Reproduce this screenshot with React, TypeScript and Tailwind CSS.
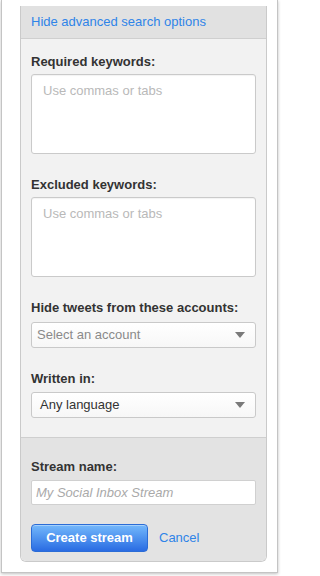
import { useState } from "react";

function Caret() {
  return (
    <svg width="10" height="6" viewBox="0 0 10 6" className="shrink-0">
      <path d="M0 0 L10 0 L5 6 Z" fill="#7a7a7a" />
    </svg>
  );
}

function Label({ children, gap }: { children: string; gap: string }) {
  return (
    <div className={`text-[13px] font-bold leading-[17px] text-[#333] ${gap}`}>
      {children}
    </div>
  );
}

function FakeSelect({
  value,
  muted,
  indent,
}: {
  value: string;
  muted?: boolean;
  indent: string;
}) {
  return (
    <div
      className={`flex h-[26px] items-center justify-between rounded-[3px] border border-[#c9c9c9] bg-gradient-to-b from-white to-[#f7f7f7] pr-[10px] ${indent}`}
    >
      <span
        className={`text-[13px] ${muted ? "text-[#8a8a8a]" : "text-[#333]"}`}
      >
        {value}
      </span>
      <Caret />
    </div>
  );
}

export default function App() {
  const [required, setRequired] = useState("");
  const [excluded, setExcluded] = useState("");
  const [name, setName] = useState("");

  return (
    <div className="min-h-[576px] bg-white font-['Liberation_Sans',Arial,sans-serif]">
      <div className="ml-[1px] h-[573px] w-[277px] border-x border-b border-[#c4c4c4] bg-white pt-[6px] shadow-[0_1px_3px_rgba(0,0,0,0.25)]">
        <div className="ml-[18px] w-[247px] overflow-hidden rounded-b-[6px] border-x border-b border-[#cacaca]">
          <div className="flex h-[33px] items-center border-b border-[#cfcfcf] bg-[#e1e1e1] px-[10px]">
            <a className="cursor-pointer text-[13px] text-[#2f84e8]">
              Hide advanced search options
            </a>
          </div>

          <div className="flex flex-col gap-[22px] bg-[#f2f2f2] px-[10px] pb-[19px] pt-[14px]">
            <div>
              <Label gap="mb-[4px]">Required keywords:</Label>
              <textarea
                value={required}
                onChange={(e) => setRequired(e.target.value)}
                placeholder="Use commas or tabs"
                className="block h-[80px] w-full resize-none rounded-[3px] border border-[#cacaca] bg-white px-[11px] py-[8px] text-[13px] leading-[16px] text-[#333] shadow-[inset_0_1px_1px_rgba(0,0,0,0.05)] outline-none placeholder:text-[#b9b9b9]"
              />
            </div>
            <div>
              <Label gap="mb-[4px]">Excluded keywords:</Label>
              <textarea
                value={excluded}
                onChange={(e) => setExcluded(e.target.value)}
                placeholder="Use commas or tabs"
                className="block h-[80px] w-full resize-none rounded-[3px] border border-[#cacaca] bg-white px-[11px] py-[8px] text-[13px] leading-[16px] text-[#333] shadow-[inset_0_1px_1px_rgba(0,0,0,0.05)] outline-none placeholder:text-[#b9b9b9]"
              />
            </div>
            <div>
              <Label gap="mb-[6px]">Hide tweets from these accounts:</Label>
              <FakeSelect value="Select an account" muted indent="pl-[5px]" />
            </div>
            <div>
              <Label gap="mb-[5px]">Written in:</Label>
              <FakeSelect value="Any language" indent="pl-[8px]" />
            </div>
          </div>

          <div className="border-t border-[#cfcfcf] bg-[#e3e3e3] px-[10px] pb-[9px] pt-[20px]">
            <Label gap="mb-[5px]">Stream name:</Label>
            <input
              value={name}
              onChange={(e) => setName(e.target.value)}
              placeholder="My Social Inbox Stream"
              className="block h-[25px] w-full rounded-[2px] border border-[#d0d0d0] bg-white px-[4px] text-[13px] text-[#333] outline-none placeholder:italic placeholder:text-[#a9a9a9]"
            />
            <div className="mt-[19px] flex items-center gap-[11px]">
              <button
                type="button"
                className="h-[28px] w-[117px] rounded-[4px] border border-[#2b6cd6] bg-gradient-to-b from-[#74b8fb] to-[#2a6be2] text-[13px] font-bold text-white shadow-[inset_0_1px_0_rgba(255,255,255,0.35)]"
              >
                Create stream
              </button>
              <a className="cursor-pointer text-[13px] text-[#2f84e8]">Cancel</a>
            </div>
          </div>
        </div>
      </div>
    </div>
  );
}
